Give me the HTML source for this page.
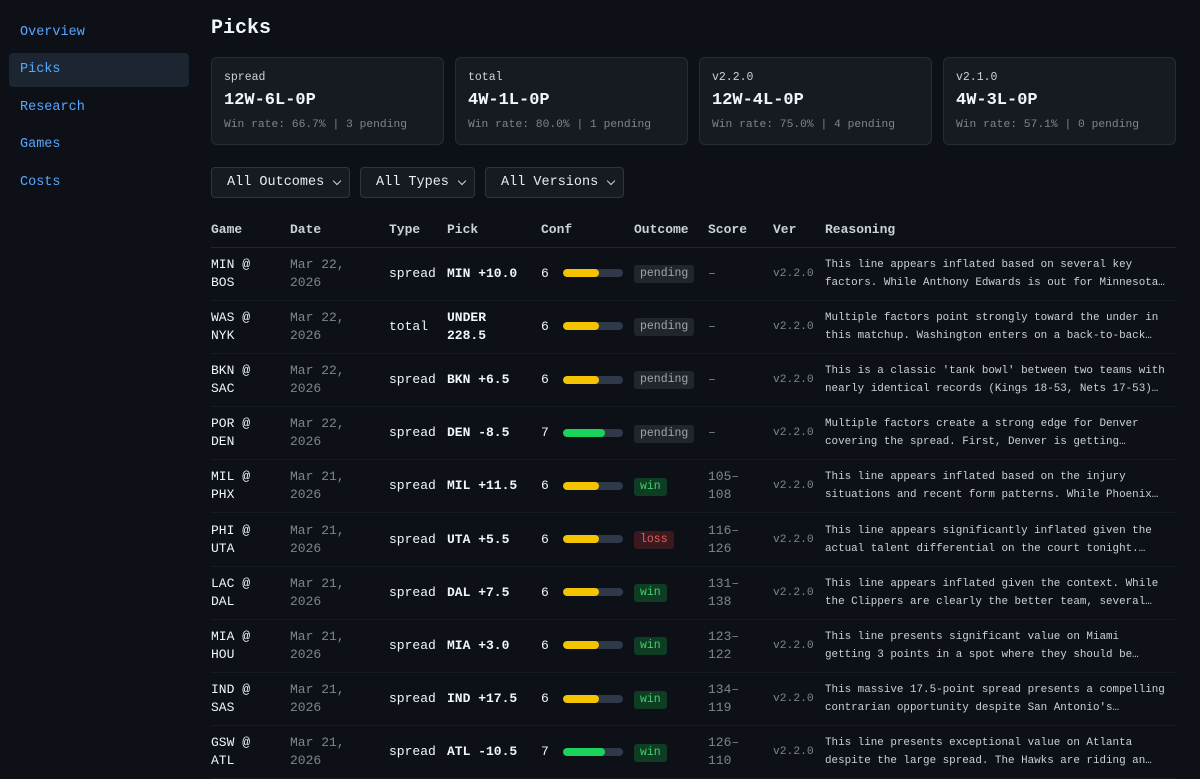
<!DOCTYPE html>
<html><head><meta charset="utf-8"><style>
*{box-sizing:border-box;margin:0;padding:0}
body{width:1200px;height:775px;overflow:hidden;background:#0d1117;font-family:"Liberation Mono",monospace;color:#e6edf3;position:relative}
.side{position:absolute;left:0;top:0;width:197px;height:775px;background:#0d1117}
.side a{position:absolute;left:9px;width:180px;height:34px;padding-left:11px;line-height:34px;color:#58a6ff;font-size:13.5px;border-radius:4px}
.side a.act{background:#1c2633}
h1{position:absolute;left:211px;top:17px;font-size:20px;font-weight:bold;color:#f0f6fc}
.card{position:absolute;top:57px;width:233px;height:88px;background:#161b22;border:1px solid #262c35;border-radius:6px;padding:13px 12px}
.card .l{font-size:11.5px;color:#c9d1d9}
.card .v{font-size:17px;font-weight:bold;margin-top:7px;color:#f0f6fc}
.card .s{font-size:11.3px;color:#7d8590;margin-top:9px}
.sel{position:absolute;top:167px;height:31px;background:#161b22;border:1px solid #30363d;border-radius:4px;font-size:13.5px;color:#e6edf3;line-height:30px;padding-left:15px}
.sel:after{content:"";position:absolute;right:9px;top:10px;width:5px;height:5px;border-right:1.5px solid #c9d1d9;border-bottom:1.5px solid #c9d1d9;transform:rotate(45deg)}
table{position:absolute;left:211px;top:212px;width:965px;border-collapse:collapse;table-layout:fixed}
th{text-align:left;font-size:13px;color:#c9d1d9;height:35px;font-weight:bold;border-bottom:1px solid #21262d;vertical-align:middle}
td{height:53.2px;font-size:13px;line-height:18px;border-bottom:1px solid #161b22;vertical-align:middle;color:#f0f6fc}
.d{color:#7d8590}
.p{font-weight:bold}
.bar{display:inline-block;width:60px;height:8px;background:#30394a;border-radius:4px;vertical-align:middle;margin-left:14px;overflow:hidden}
.bar i{display:block;height:8px;width:36px;background:#f5c400;border-radius:4px}
.bar i.g{width:42px;background:#1ad35a}
.b{display:inline-block;font-size:11.5px;padding:0 6px;line-height:18px;border-radius:3px;background:#21262d;color:#9da5ae}
.b.w{background:#0f3d24;color:#3fd06a}
.b.x{background:#3a1a1e;color:#f05b5b}
.r{font-size:10.9px;color:#c9d1d9;overflow:hidden}
.r div{white-space:nowrap;overflow:hidden;text-overflow:ellipsis}
.ver{font-size:11.3px;color:#7d8590}
</style></head><body>
<div class="side">
<a style="top:16px">Overview</a>
<a class="act" style="top:53px">Picks</a>
<a style="top:91px">Research</a>
<a style="top:128px">Games</a>
<a style="top:166px">Costs</a>
</div>
<h1>Picks</h1>
<div class="card" style="left:211px"><div class="l">spread</div><div class="v">12W-6L-0P</div><div class="s">Win rate: 66.7% | 3 pending</div></div>
<div class="card" style="left:455px"><div class="l">total</div><div class="v">4W-1L-0P</div><div class="s">Win rate: 80.0% | 1 pending</div></div>
<div class="card" style="left:699px"><div class="l">v2.2.0</div><div class="v">12W-4L-0P</div><div class="s">Win rate: 75.0% | 4 pending</div></div>
<div class="card" style="left:943px"><div class="l">v2.1.0</div><div class="v">4W-3L-0P</div><div class="s">Win rate: 57.1% | 0 pending</div></div>
<div class="sel" style="left:211px;width:139px">All Outcomes</div>
<div class="sel" style="left:360px;width:115px">All Types</div>
<div class="sel" style="left:485px;width:139px">All Versions</div>
<table>
<colgroup><col style="width:79px"><col style="width:99px"><col style="width:58px"><col style="width:94px"><col style="width:93px"><col style="width:74px"><col style="width:65px"><col style="width:52px"><col></colgroup>
<tr><th>Game</th><th>Date</th><th>Type</th><th>Pick</th><th>Conf</th><th>Outcome</th><th>Score</th><th>Ver</th><th>Reasoning</th></tr>
<tr><td>MIN @<br>BOS</td><td class="d">Mar 22,<br>2026</td><td>spread</td><td class="p">MIN +10.0</td><td>6<span class="bar"><i></i></span></td><td><span class="b">pending</span></td><td class="d">–</td><td class="ver">v2.2.0</td><td class="r"><div>This line appears inflated based on several key</div><div>factors. While Anthony Edwards is out for Minnesota…</div></td></tr>
<tr><td>WAS @<br>NYK</td><td class="d">Mar 22,<br>2026</td><td>total</td><td class="p">UNDER<br>228.5</td><td>6<span class="bar"><i></i></span></td><td><span class="b">pending</span></td><td class="d">–</td><td class="ver">v2.2.0</td><td class="r"><div>Multiple factors point strongly toward the under in</div><div>this matchup. Washington enters on a back-to-back…</div></td></tr>
<tr><td>BKN @<br>SAC</td><td class="d">Mar 22,<br>2026</td><td>spread</td><td class="p">BKN +6.5</td><td>6<span class="bar"><i></i></span></td><td><span class="b">pending</span></td><td class="d">–</td><td class="ver">v2.2.0</td><td class="r"><div>This is a classic 'tank bowl' between two teams with</div><div>nearly identical records (Kings 18-53, Nets 17-53)…</div></td></tr>
<tr><td>POR @<br>DEN</td><td class="d">Mar 22,<br>2026</td><td>spread</td><td class="p">DEN -8.5</td><td>7<span class="bar"><i class="g"></i></span></td><td><span class="b">pending</span></td><td class="d">–</td><td class="ver">v2.2.0</td><td class="r"><div>Multiple factors create a strong edge for Denver</div><div>covering the spread. First, Denver is getting…</div></td></tr>
<tr><td>MIL @<br>PHX</td><td class="d">Mar 21,<br>2026</td><td>spread</td><td class="p">MIL +11.5</td><td>6<span class="bar"><i></i></span></td><td><span class="b w">win</span></td><td class="d">105–<br>108</td><td class="ver">v2.2.0</td><td class="r"><div>This line appears inflated based on the injury</div><div>situations and recent form patterns. While Phoenix…</div></td></tr>
<tr><td>PHI @<br>UTA</td><td class="d">Mar 21,<br>2026</td><td>spread</td><td class="p">UTA +5.5</td><td>6<span class="bar"><i></i></span></td><td><span class="b x">loss</span></td><td class="d">116–<br>126</td><td class="ver">v2.2.0</td><td class="r"><div>This line appears significantly inflated given the</div><div>actual talent differential on the court tonight.…</div></td></tr>
<tr><td>LAC @<br>DAL</td><td class="d">Mar 21,<br>2026</td><td>spread</td><td class="p">DAL +7.5</td><td>6<span class="bar"><i></i></span></td><td><span class="b w">win</span></td><td class="d">131–<br>138</td><td class="ver">v2.2.0</td><td class="r"><div>This line appears inflated given the context. While</div><div>the Clippers are clearly the better team, several…</div></td></tr>
<tr><td>MIA @<br>HOU</td><td class="d">Mar 21,<br>2026</td><td>spread</td><td class="p">MIA +3.0</td><td>6<span class="bar"><i></i></span></td><td><span class="b w">win</span></td><td class="d">123–<br>122</td><td class="ver">v2.2.0</td><td class="r"><div>This line presents significant value on Miami</div><div>getting 3 points in a spot where they should be…</div></td></tr>
<tr><td>IND @<br>SAS</td><td class="d">Mar 21,<br>2026</td><td>spread</td><td class="p">IND +17.5</td><td>6<span class="bar"><i></i></span></td><td><span class="b w">win</span></td><td class="d">134–<br>119</td><td class="ver">v2.2.0</td><td class="r"><div>This massive 17.5-point spread presents a compelling</div><div>contrarian opportunity despite San Antonio's…</div></td></tr>
<tr><td>GSW @<br>ATL</td><td class="d">Mar 21,<br>2026</td><td>spread</td><td class="p">ATL -10.5</td><td>7<span class="bar"><i class="g"></i></span></td><td><span class="b w">win</span></td><td class="d">126–<br>110</td><td class="ver">v2.2.0</td><td class="r"><div>This line presents exceptional value on Atlanta</div><div>despite the large spread. The Hawks are riding an…</div></td></tr>
</table>
</body></html>
